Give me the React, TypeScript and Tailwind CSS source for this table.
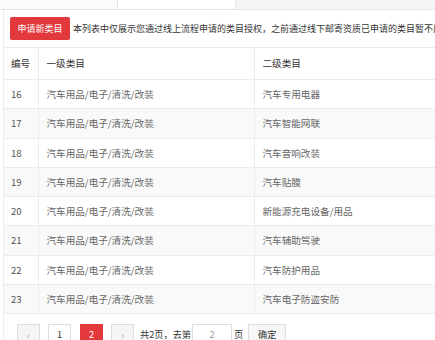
import React from 'react';

const rows = [
    { id: 16, first: '汽车用品/电子/清洗/改装', second: '汽车专用电器' },
    { id: 17, first: '汽车用品/电子/清洗/改装', second: '汽车智能网联' },
    { id: 18, first: '汽车用品/电子/清洗/改装', second: '汽车音响改装' },
    { id: 19, first: '汽车用品/电子/清洗/改装', second: '汽车贴膜' },
    { id: 20, first: '汽车用品/电子/清洗/改装', second: '新能源充电设备/用品' },
    { id: 21, first: '汽车用品/电子/清洗/改装', second: '汽车辅助驾驶' },
    { id: 22, first: '汽车用品/电子/清洗/改装', second: '汽车防护用品' },
    { id: 23, first: '汽车用品/电子/清洗/改装', second: '汽车电子防盗安防' },
];

export default function App() {
    return (
        <div
            className="w-[435px] h-[340px] overflow-hidden bg-white text-[9.6px] text-[#333]"
            style={{ fontFamily: '"Noto Sans CJK SC", "Microsoft YaHei", sans-serif' }}
        >
            {/* tabs, cut off at top */}
            <div className="flex h-[10px] bg-[#f4f4f4] border-b border-[#e6e6e6]">
                <div className="w-[118px] bg-[#fbfbfb] border-r border-[#e6e6e6]" />
                <div className="w-[118px] bg-white border-r border-[#e6e6e6]" />
            </div>

            <div className="ml-[3px] border-l border-[#ececec] h-full">
                {/* toolbar */}
                <div className="flex items-center h-[37px] pl-[6px] gap-[3px] whitespace-nowrap">
                    <button className="shrink-0 h-[23px] w-[60px] bg-[#e4393c] text-white text-[9px] rounded-[2px] leading-none">
                        申请新类目
                    </button>
                    <span className="shrink-0 text-[9px] text-[#333]">
                        本列表中仅展示您通过线上流程申请的类目授权，之前通过线下邮寄资质已申请的类目暂不展示
                    </span>
                </div>

                {/* table */}
                <table className="w-[600px] border-collapse table-fixed">
                    <colgroup>
                        <col className="w-[34px]" />
                        <col className="w-[216px]" />
                        <col />
                    </colgroup>
                    <thead>
                        <tr className="h-[32px] border-y border-[#ececec]">
                            <th className="font-normal text-left pl-[7px] border-r border-[#ececec]">编号</th>
                            <th className="font-normal text-left pl-[8px] border-r border-[#ececec]">一级类目</th>
                            <th className="font-normal text-left pl-[8px]">二级类目</th>
                        </tr>
                    </thead>
                    <tbody>
                        {rows.map((r, i) => (
                            <tr
                                key={r.id}
                                className={`h-[29.3px] border-b border-[#ececec] ${i % 2 === 1 ? 'bg-[#f9f9f9]' : 'bg-white'}`}
                            >
                                <td className="pl-[7px] border-r border-[#ececec] text-[#555]">{r.id}</td>
                                <td className="pl-[8px] border-r border-[#ececec] text-[#666]">{r.first}</td>
                                <td className="pl-[8px] text-[#666]">{r.second}</td>
                            </tr>
                        ))}
                    </tbody>
                </table>

                {/* pagination */}
                <div className="flex items-center mt-[10px] pl-[13px] text-[9.2px] whitespace-nowrap">
                    <div className="w-[23px] h-[22px] border border-[#ddd] bg-[#f5f5f5] text-[#bbb] text-[12px] flex items-center justify-center">‹</div>
                    <div className="ml-[8px] w-[23px] h-[22px] border border-[#ddd] bg-white text-[#333] flex items-center justify-center">1</div>
                    <div className="ml-[9px] w-[23px] h-[22px] bg-[#e4393c] text-white flex items-center justify-center">2</div>
                    <div className="ml-[8px] w-[23px] h-[22px] border border-[#ddd] bg-[#f5f5f5] text-[#bbb] text-[12px] flex items-center justify-center">›</div>
                    <span className="ml-[6px] text-[#333]">共2页，去第</span>
                    <div className="ml-[1px] w-[40px] h-[22px] border border-[#ddd] bg-white text-[#999] flex items-center justify-center">2</div>
                    <span className="ml-[2px] text-[#333]">页</span>
                    <div className="ml-[5px] w-[38px] h-[22px] border border-[#ddd] bg-[#f7f7f7] text-[#333] flex items-center justify-center">确定</div>
                </div>
            </div>
        </div>
    );
}
